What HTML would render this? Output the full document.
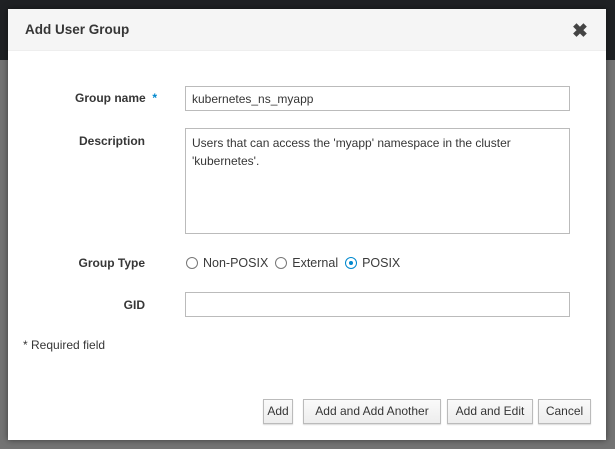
<html><head><style>
body{margin:0;width:615px;height:449px;background:#737373;position:relative;overflow:hidden;font-family:"Liberation Sans",sans-serif;font-size:12px;color:#363636}
.top{position:absolute;left:0;top:0;width:615px;height:60px;background:#1f2124}
.dlg{position:absolute;left:8px;top:9px;width:598px;height:431px;background:#fff;box-shadow:0 0 6px rgba(0,0,0,.5)}
.hd{height:41px;background:#f5f5f5;border-bottom:1px solid #eee}
.hd b{position:absolute;left:17px;top:13px;font-size:13.5px;color:#363636}
.x{position:absolute;left:564px;top:11px;font-size:19px;font-weight:bold;color:#444}
.lbl{position:absolute;right:461px;font-weight:bold;text-align:right}
.in{position:absolute;left:177px;width:385px;border:1px solid #bbb;box-sizing:border-box;background:#fff}
.req{color:#0088ce}
.r{display:inline-block;width:12px;height:12px;border:1px solid #777;border-radius:50%;box-sizing:border-box;vertical-align:-2px;margin-right:5px;position:relative}
.btn{position:absolute;top:390px;height:25px;border:1px solid #bbb;background:linear-gradient(#fafafa,#ededed);box-sizing:border-box;font-size:12px;line-height:23px;text-align:center;box-shadow:0 1px 1px rgba(0,0,0,.15)}
</style></head><body>
<div class="top"></div>
<div class="dlg">
<div class="hd"><b>Add User Group</b><span class="x">✖</span></div>
<div class="lbl" style="top:82px;right:449px">Group name &nbsp;<span class="req">*</span></div>
<div class="in" style="top:77px;height:25px;padding:5px 6px">kubernetes_ns_myapp</div>
<div class="lbl" style="top:125px">Description</div>
<div class="in" style="top:119px;height:106px;padding:5px 6px;line-height:18px">Users that can access the 'myapp' namespace in the cluster 'kubernetes'.</div>
<div class="lbl" style="top:247px">Group Type</div>
<div style="position:absolute;left:178px;top:247px;color:#3a3a3a;font-size:12.5px"><span class="r"></span>Non-POSIX &nbsp;<span class="r"></span>External &nbsp;<span class="r" style="border-color:#0088ce"><span style="position:absolute;left:3px;top:3px;width:4px;height:4px;border-radius:50%;background:#0088ce"></span></span>POSIX</div>
<div class="lbl" style="top:289px">GID</div>
<div class="in" style="top:283px;height:25px"></div>
<div style="position:absolute;left:15px;top:329px">* Required field</div>
<div class="btn" style="left:255px;width:30px">Add</div>
<div class="btn" style="left:295px;width:138px">Add and Add Another</div>
<div class="btn" style="left:439px;width:86px">Add and Edit</div>
<div class="btn" style="left:530px;width:53px">Cancel</div>
</div>
</body></html>
